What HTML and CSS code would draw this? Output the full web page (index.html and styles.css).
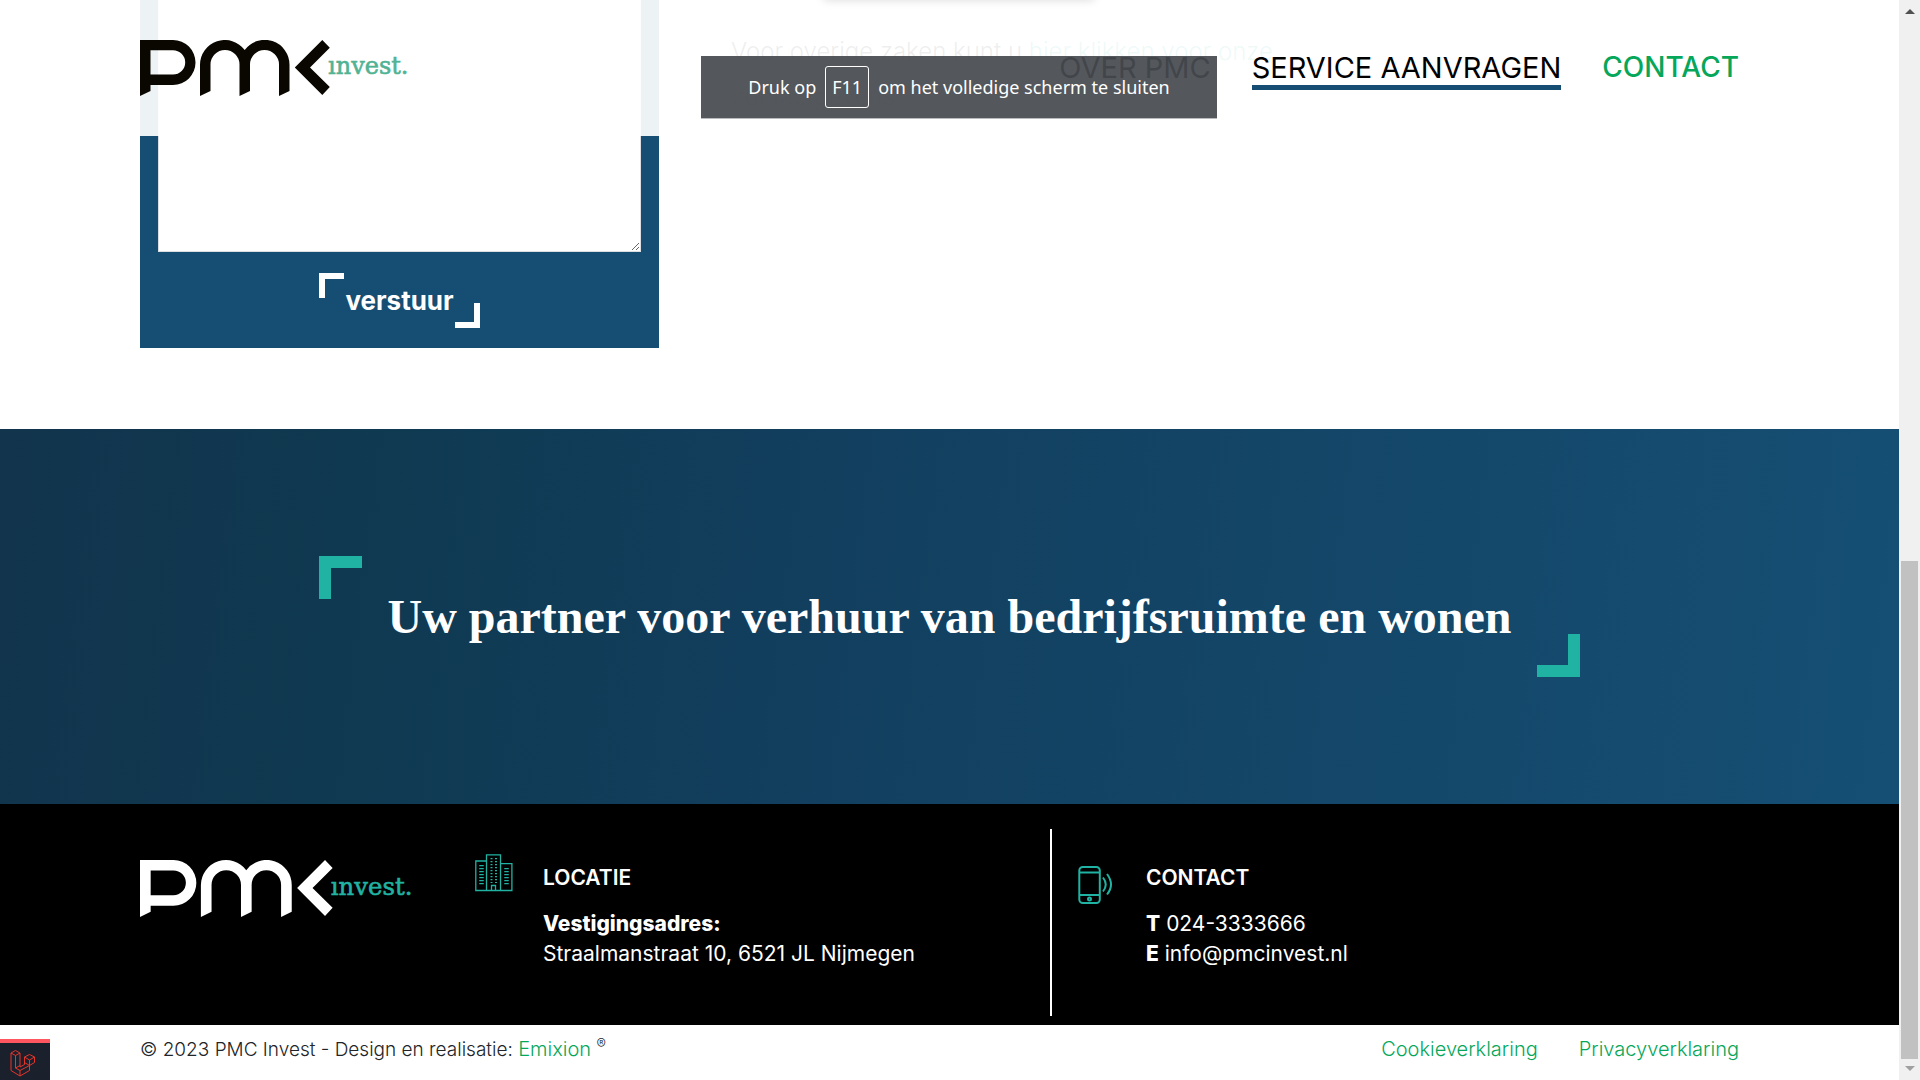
FILE: index.html
```html
<!DOCTYPE html>
<html lang="nl">
<head>
<meta charset="utf-8">
<title>PMC Invest - Service aanvragen</title>
<link rel="stylesheet" href="styles.css">
</head>
<body>
<svg class="sprite" aria-hidden="true">
  <symbol id="logo" viewBox="0 0 268 57">
    <path fill="currentColor" fill-rule="evenodd" d="M0 0H33A22.5 22.5 0 0 1 33 45H10.5V51L0 56ZM10.5 10.2V34.6H33A12.2 12.2 0 0 0 33 10.2Z"/>
    <path fill="currentColor" d="M60 56V24.7A24.8 24.8 0 0 1 104.7 10A24.8 24.8 0 0 1 149.5 24.7V51L139 56V24.5A14.5 14.5 0 0 0 110 24.5V51L99.5 56V24.5A14.5 14.5 0 0 0 70.5 24.5V51Z"/>
    <path fill="currentColor" d="M182.3 0L189.8 7.8L170 27.5L189.8 47L182.3 55L154.8 27.5Z"/>
    <text class="logo-word" x="188" y="34">ınvest.</text>
  </symbol>
</svg>

<div class="page">
  <header class="header">
    <a class="logo logo-dark" href="#" aria-label="PMC Invest"><svg><use href="#logo"/></svg></a>
    <nav class="nav">
      <a href="#">OVER PMC</a>
      <a class="active" href="#">SERVICE AANVRAGEN</a>
      <a class="accent" href="#">CONTACT</a>
    </nav>
  </header>

  <main class="main">
    <form class="form">
      <textarea aria-label="Bericht"></textarea>
      <button class="send" type="button">verstuur</button>
    </form>
    <p class="note">Voor overige zaken kunt u <a href="#">hier klikken voor onze</a><br>contactgevens.</p>
  </main>

  <section class="banner">
    <h2 class="slogan">Uw partner voor verhuur van bedrijfsruimte en wonen</h2>
  </section>

  <footer class="footer">
    <a class="logo logo-light" href="#" aria-label="PMC Invest"><svg><use href="#logo"/></svg></a>
    <section class="block">
      <svg class="icon" viewBox="0 0 38 38" fill="none" stroke="currentColor" stroke-width="1.3">
        <path d="M11.5 37V.8H25.5V37M11.5 7H.8V36.5H36.9V9.7H25.5M16.5 36V31.5H20.5V36"/>
        <path stroke-width="2" stroke-dasharray="1.3 1.7" d="M16.5 4V29M21 4V29"/>
        <path stroke-width="4.5" stroke-dasharray="1.3 1.7" d="M6.5 11V32M31.5 14V32"/>
      </svg>
      <div>
        <h3>LOCATIE</h3>
        <p><strong>Vestigingsadres:</strong><br>Straalmanstraat 10, 6521 JL Nijmegen</p>
      </div>
    </section>
    <section class="block block-contact">
      <svg class="icon icon-phone" viewBox="0 0 38 38" fill="none" stroke="currentColor" stroke-width="2">
        <rect x="1.3" y="1" width="20.5" height="36" rx="3.5"/>
        <path d="M1.3 6.5H21.8M1.3 29H21.8M25 11.5Q30.5 18.500 25 25.500M29 8Q37 18.500 29 28.500"/>
        <circle cx="11.5" cy="33" r="1.5"/>
      </svg>
      <div>
        <h3>CONTACT</h3>
        <p><strong>T</strong> <a href="#">024-3333666</a><br><strong>E</strong> <a href="#">info@pmcinvest.nl</a></p>
      </div>
    </section>
  </footer>

  <div class="legal">
    <p>© 2023 PMC Invest - Design en realisatie: <a href="#">Emixion</a> <sup>®</sup></p>
    <nav>
      <a href="#">Cookieverklaring</a>
      <a href="#">Privacyverklaring</a>
    </nav>
  </div>
</div>

<div class="scrollbar" aria-hidden="true">
  <span class="arrow arrow-up"></span>
  <span class="thumb"></span>
  <span class="arrow arrow-down"></span>
</div>

<div class="popup-shadow"></div>
<div class="toast" role="status">Druk op <kbd>F11</kbd> om het volledige scherm te sluiten</div>

<button class="debug" type="button" aria-label="Debugbar">
  <svg viewBox="0 0 28 28" fill="none" stroke="#e5352b" stroke-linejoin="round">
    <path d="M1 4L5.500 1.500L10 4V18L14.500 15.500V8L19.500 5.500L24.500 8V13.500L19.500 16.500V21.500L10 27L1 21.500ZM1 4L5.500 6.500L10 4M5.500 6.500V19L10 21.500L19.500 16.500L14.500 13.500M5.500 19L10 16.500M10 21.500V27M14.500 8L19.500 11L24.500 8M19.500 11V16.500"/>
  </svg>
</button>
</body>
</html>
```
FILE: styles.css
```css
*,
*::before,
*::after {
  box-sizing: border-box;
}

body {
  margin: 0;
  display: flex;
  min-height: 100vh;
  overflow: hidden;
  background: #fff;
  color: #212529;
  font-family: Inter, "Open Sans", sans-serif;
  font-size: 21px;
  line-height: 30px;
}

a {
  color: inherit;
  text-decoration: none;
}

p,
h2,
h3 {
  margin: 0;
}

.sprite {
  position: absolute;
  width: 0;
  height: 0;
}

.page {
  flex: 1;
  min-width: 0;
  position: relative;
}

/* Header */
.header {
  position: absolute;
  z-index: 2;
  top: 0;
  left: 0;
  right: 0;
  height: 136px;
  padding: 40px 160px 0 140px;
  display: flex;
  justify-content: space-between;
  align-items: flex-start;
  background: rgba(255, 255, 255, 0.925);
}

.logo {
  display: block;
}

.logo svg {
  display: block;
  width: 100%;
  height: 100%;
}

.logo-word {
  font-family: "DejaVu Serif", serif;
  font-size: 24px;
  fill: var(--word);
  stroke: var(--word);
  stroke-width: 0.6;
}

.logo-dark {
  width: 268px;
  height: 57px;
  color: #0a0700;
  --word: #50b394;
}

.logo-light {
  width: 272px;
  height: 58px;
  margin-top: 31px;
  color: #fff;
  --word: #20b2a2;
}

.nav {
  display: flex;
  gap: 41px;
  padding-top: 10px;
  color: #000;
  font-size: 29px;
  line-height: 35px;
}

.nav a {
  border-bottom: 5px solid transparent;
}

.nav .active {
  border-color: #154e72;
}

.nav .accent {
  color: #06a75a;
  font-size: 28px;
  font-weight: 500;
}

/* Form area */
.main {
  display: grid;
  grid-template-columns: 519px 1fr;
  gap: 72px;
  padding: 0 160px 81px 140px;
}

.form {
  display: flex;
  flex-direction: column;
  align-items: center;
  gap: 21px;
  padding: 0 18px 20px;
  background: #154e72;
}

.form textarea {
  display: block;
  width: 100%;
  height: 252px;
  border: 1px solid #dcdee2;
  border-top: 0;
  background: #fff;
  resize: vertical;
}

.send {
  position: relative;
  height: 55px;
  padding: 0 26px;
  border: 0;
  background: none;
  color: #fff;
  font: 700 26px/55px Inter, sans-serif;
}

.send::before,
.send::after,
.slogan::before,
.slogan::after {
  content: "";
  position: absolute;
  width: 25px;
  height: 25px;
  border: 0 solid currentColor;
}

.send::before {
  top: 0;
  left: 0;
  border-width: 6px 0 0 6px;
}

.send::after {
  bottom: 0;
  right: 0;
  border-width: 0 6px 6px 0;
}

.note {
  padding-top: 29px;
  font-size: 24px;
  font-weight: 300;
  line-height: 45px;
}

.note a {
  color: #20b2a2;
}

/* Slogan banner */
.banner {
  display: flex;
  justify-content: center;
  padding: 127px 140px;
  background: linear-gradient(97deg, #12344d, #0f3950 18%, #123e5d 40%, #154f74);
}

.slogan {
  position: relative;
  padding: 0 69px;
  color: #fff;
  font-family: "Liberation Serif", serif;
  font-size: 48px;
  font-weight: 700;
  line-height: 121px;
}

.slogan::before,
.slogan::after {
  width: 43px;
  height: 43px;
  color: #20b2a2;
}

.slogan::before {
  top: 0;
  left: 0;
  border-width: 12px 0 0 12px;
}

.slogan::after {
  bottom: 0;
  right: 0;
  border-width: 0 12px 12px 0;
}

/* Footer */
.footer {
  display: grid;
  grid-template-columns: 335px 575px 1fr;
  align-items: start;
  padding: 25px 160px 9px 140px;
  background: #000;
  color: #fff;
}

.block {
  display: flex;
  gap: 30px;
  padding-top: 34px;
}

.block-contact {
  min-height: 187px;
  padding-left: 26px;
  border-left: 2px solid #fff;
}

.block h3 {
  margin-bottom: 16px;
  font-size: 21px;
  font-weight: 600;
}

.block strong {
  font-weight: 800;
}

.icon {
  flex: none;
  width: 38px;
  height: 38px;
  margin-top: -9px;
  color: #20b2a2;
}

.icon-phone {
  margin-top: 3px;
}

.legal {
  display: flex;
  justify-content: space-between;
  padding: 9px 160px 16px 140px;
  font-size: 19px;
  font-weight: 300;
}

.legal a {
  color: #06a75a;
  font-size: 20px;
}

.legal nav {
  display: flex;
  gap: 41px;
}

.legal sup {
  font-size: 14px;
  line-height: 0;
}

/* Window furniture */
.scrollbar {
  flex: none;
  width: 21px;
  height: 100vh;
  padding: 9px 2px;
  display: flex;
  flex-direction: column;
  align-items: center;
  background: #f0f0f0;
}

.arrow {
  border: 5px solid transparent;
}

.arrow-up {
  border-top: 0;
  border-bottom-color: #505050;
}

.arrow-down {
  margin-top: 7px;
  border-bottom: 0;
  border-top-color: #a0a0a0;
}

.thumb {
  width: 17px;
  height: 498px;
  margin-top: auto;
  background: #c1c1c1;
}

.popup-shadow {
  position: absolute;
  z-index: 3;
  top: -10px;
  left: 50%;
  width: 272px;
  height: 10px;
  margin-left: -137px;
  border-radius: 4px;
  box-shadow: 0 0 10px rgba(0, 0, 0, 0.15);
}

.toast {
  position: absolute;
  z-index: 4;
  top: 56px;
  left: 50%;
  display: flex;
  justify-content: center;
  align-items: center;
  gap: 9px;
  width: 516px;
  height: 63px;
  margin-left: -259px;
  border-bottom: 1px solid #b9bbbe;
  background: rgba(77, 80, 86, 0.9);
  background: rgba(71, 74, 80, 0.93);
  color: #fff;
  font: 18px/24px "Noto Sans", sans-serif;
  white-space: nowrap;
}

.toast kbd {
  padding: 8px 6px;
  border: 1px solid #fff;
  border-radius: 3px;
  font: inherit;
}

.debug {
  position: absolute;
  z-index: 5;
  left: 0;
  bottom: 0;
  width: 50px;
  height: 41px;
  padding: 5px 10px 2px;
  border: 0;
  border-top: 4px solid #ff5660;
  background: #1a202c;
}

.debug svg {
  display: block;
  width: 28px;
  height: 28px;
}
```
